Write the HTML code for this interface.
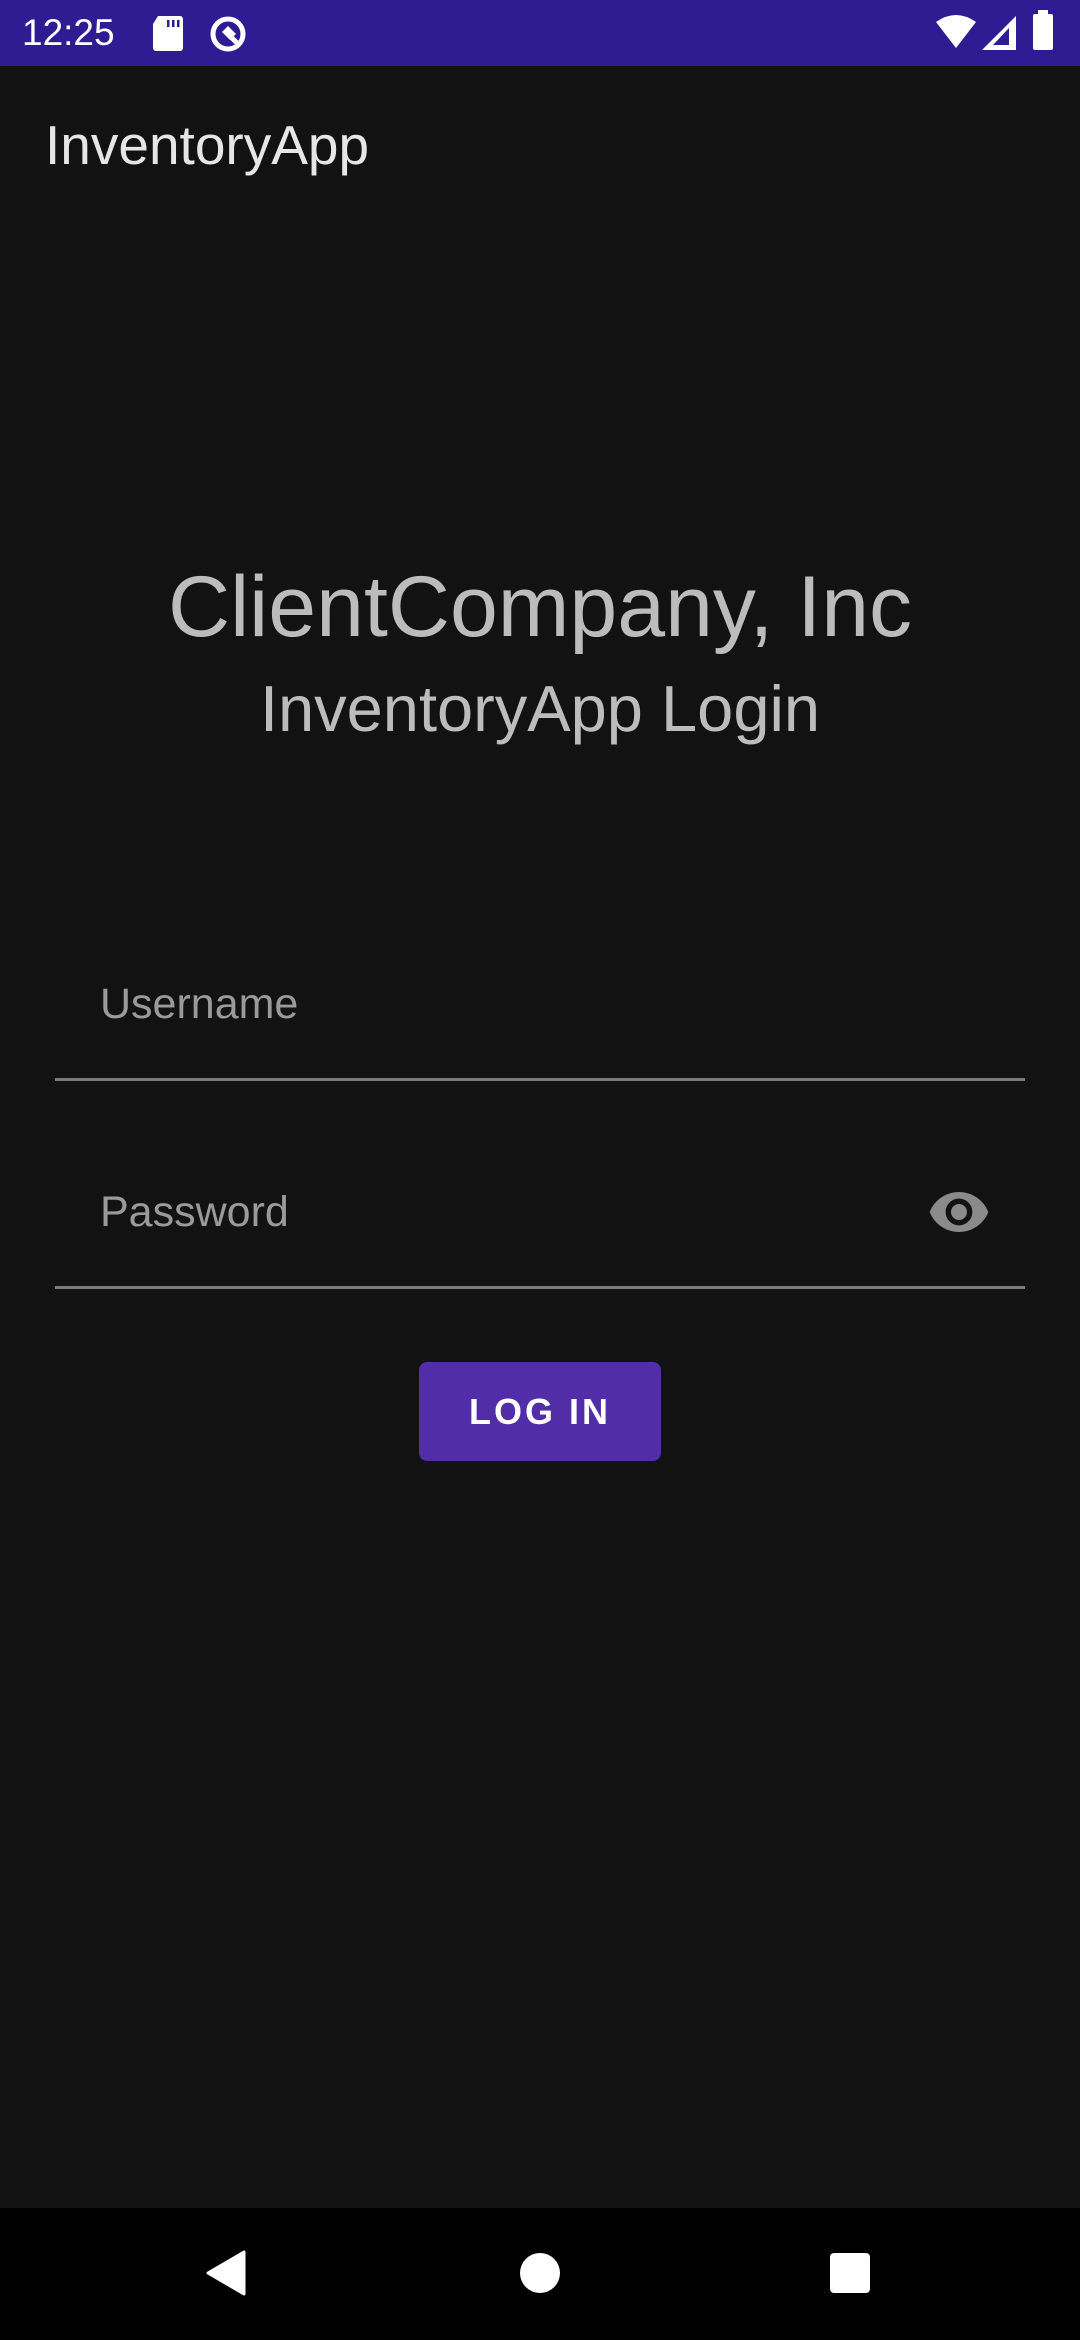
<!DOCTYPE html>
<html><head><meta charset="utf-8"><style>
*{margin:0;padding:0;box-sizing:border-box}
body{width:1080px;height:2340px;background:#121212;position:relative;overflow:hidden;font-family:"Liberation Sans",Roboto,sans-serif}
.abs{position:absolute}
</style></head><body>
<div class="abs" style="left:0;top:0;width:1080px;height:66px;background:#2f1c92"></div>
<div class="abs" style="left:22px;top:12px;color:#fff;font-size:37px;line-height:42px">12:25</div>
<svg class="abs" style="left:150px;top:14px" width="36" height="38" viewBox="0 0 36 38"><path d="M8 2h22a3 3 0 0 1 3 3v29a3 3 0 0 1-3 3H6a3 3 0 0 1-3-3V10z" fill="#fff"/><rect x="17" y="6" width="2.5" height="7" fill="#2f1c92"/><rect x="22" y="6" width="2.5" height="7" fill="#2f1c92"/><rect x="27" y="6" width="2.5" height="7" fill="#2f1c92"/></svg>
<svg class="abs" style="left:208px;top:14px" width="40" height="40" viewBox="0 0 40 40"><circle cx="20" cy="20" r="15" fill="none" stroke="#fff" stroke-width="5"/><path d="M20 12l8 8-6 6-8-8z" fill="#fff"/><path d="M24 24l8 8" stroke="#fff" stroke-width="5"/></svg>
<svg class="abs" style="left:936px;top:14px" width="40" height="36" viewBox="0 0 40 36"><path d="M0 8Q20-6 40 8L20 34z" fill="#fff"/></svg>
<svg class="abs" style="left:982px;top:16px" width="36" height="36" viewBox="0 0 36 36"><path d="M34 0V34H0z" fill="#fff"/><path d="M27 12V29H11z" fill="#2f1c92"/></svg>
<div class="abs" style="left:1033px;top:14px;width:20px;height:36px;background:#fff;border-radius:2px"></div>
<div class="abs" style="left:1038px;top:10px;width:10px;height:6px;background:#fff"></div>
<div class="abs" style="left:45px;top:114px;color:#e6e6e6;font-size:55px;line-height:62px">InventoryApp</div>
<div class="abs" style="left:0;width:1080px;top:557px;text-align:center;color:#bcbcbc;font-size:86px;line-height:100px">ClientCompany, Inc</div>
<div class="abs" style="left:0;width:1080px;top:670px;text-align:center;color:#bcbcbc;font-size:65px;line-height:78px">InventoryApp Login</div>
<div class="abs" style="left:100px;top:978px;color:#9a9a9a;font-size:43px;line-height:52px">Username</div>
<div class="abs" style="left:55px;top:1078px;width:970px;height:3px;background:#7a7a7a"></div>
<div class="abs" style="left:100px;top:1186px;color:#9a9a9a;font-size:43px;line-height:52px">Password</div>
<svg class="abs" style="left:927px;top:1180px" width="64" height="64" viewBox="0 0 24 24"><path fill="#8a8a8a" d="M12 4.5C7 4.5 2.73 7.61 1 12c1.73 4.39 6 7.5 11 7.5s9.27-3.11 11-7.5c-1.73-4.39-6-7.5-11-7.5zM12 17c-2.76 0-5-2.24-5-5s2.24-5 5-5 5 2.24 5 5-2.24 5-5 5zm0-8c-1.66 0-3 1.34-3 3s1.34 3 3 3 3-1.34 3-3-1.34-3-3-3z"/></svg>
<div class="abs" style="left:55px;top:1286px;width:970px;height:3px;background:#7a7a7a"></div>
<div class="abs" style="left:419px;top:1362px;width:242px;height:99px;background:#512da8;border-radius:8px;color:#fff;font-size:36px;font-weight:bold;letter-spacing:3px;text-align:center;line-height:99px">LOG IN</div>
<div class="abs" style="left:0;top:2208px;width:1080px;height:132px;background:#000"></div>
<svg class="abs" style="left:204px;top:2250px" width="44" height="46" viewBox="0 0 44 46"><path d="M40 2V44L4 23z" fill="#fff" stroke="#fff" stroke-width="3" stroke-linejoin="round"/></svg>
<div class="abs" style="left:520px;top:2253px;width:40px;height:40px;border-radius:50%;background:#fff"></div>
<div class="abs" style="left:830px;top:2253px;width:40px;height:40px;border-radius:4px;background:#fff"></div>
</body></html>
